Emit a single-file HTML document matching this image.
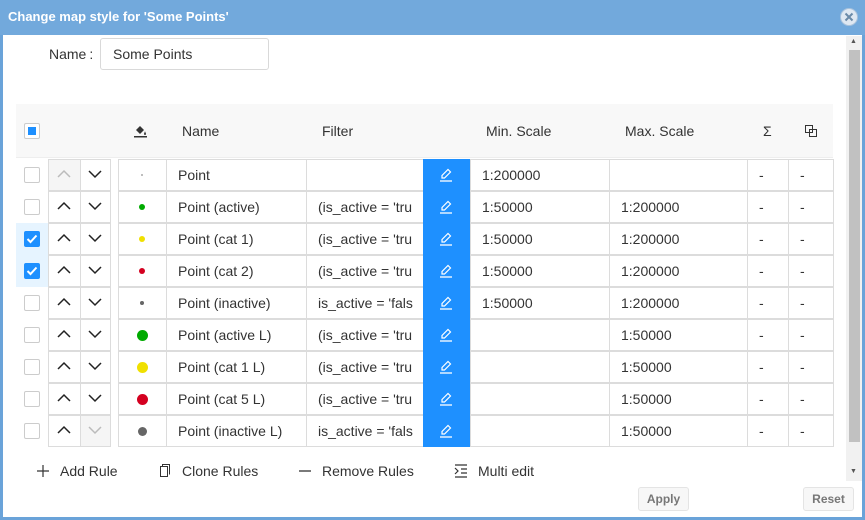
<!DOCTYPE html><html><head><style>
*{box-sizing:border-box;margin:0;padding:0}
body{width:865px;height:520px;background:#6aa3d9;font-family:"Liberation Sans",sans-serif;font-size:14px;color:#333;position:relative;overflow:hidden}
.a{position:absolute}
.c{position:absolute;border:1px solid #dcdcdc;background:#fff;height:32px;line-height:30px;padding-left:11px;white-space:nowrap;overflow:hidden}
.e{position:absolute;background:#1e90ff;height:32px;width:47px;left:423px}
.cb{position:absolute;left:24px;width:16px;height:16px;border:1px solid #ccc;border-radius:2px;background:#fff}
.cb.on{background:#1e90ff;border-color:#1e90ff}
.dot{position:absolute;border-radius:50%}
.ar{position:absolute;height:32px;border:1px solid #dcdcdc;background:#fff}
</style></head><body>
<div class="a" style="left:0;top:0;width:865px;height:35px;background:#72a9dc"></div>
<div class="a" style="left:8px;top:9px;color:#fff;font-weight:bold;font-size:13px">Change map style for 'Some Points'</div>
<div class="a" style="left:840px;top:8px;width:18px;height:18px;border-radius:50%;background:#dfe8f2;border:1px solid #a8c2dc"><svg width="16" height="16" viewBox="0 0 16 16"><path d="M4.5 4.5L11.5 11.5M11.5 4.5L4.5 11.5" stroke="#6a8aa8" stroke-width="2"/></svg></div>
<div class="a" style="left:3px;top:35px;width:859px;height:482px;background:#fff"></div>
<div class="a" style="left:846px;top:36px;width:16px;height:445px;background:#f1f1f1"></div>
<div class="a" style="left:849px;top:50px;width:11px;height:392px;background:#c1c1c1"></div>
<div class="a" style="left:850px;top:38px;font-size:7px;color:#555">▲</div>
<div class="a" style="left:850px;top:468px;font-size:7px;color:#555">▼</div>
<div class="a" style="left:49px;top:46px">Name<span style="margin-left:3px">:</span></div>
<div class="a" style="left:100px;top:38px;width:169px;height:32px;border:1px solid #d9d9d9;border-radius:3px;padding-left:12px;line-height:30px">Some Points</div>
<div class="a" style="left:16px;top:104px;width:817px;height:54px;background:#f8f8f8;border-bottom:1px solid #eee"></div>
<div class="cb" style="top:123px"><div class="a" style="left:3px;top:3px;width:8px;height:8px;background:#1e90ff"></div></div>
<svg class="a" style="left:133px;top:123px" width="16" height="16" viewBox="0 0 16 16"><path d="M3 7L7 3L11 7L7 11Z" fill="#333"/><path d="M12 8c0 1 1 2 1 3a1 1 0 0 1-2 0c0-1 1-2 1-3z" fill="#333"/><rect x="1" y="13" width="13" height="1.5" fill="#333"/></svg>
<div class="a" style="left:182px;top:123px">Name</div>
<div class="a" style="left:322px;top:123px">Filter</div>
<div class="a" style="left:486px;top:123px">Min. Scale</div>
<div class="a" style="left:625px;top:123px">Max. Scale</div>
<div class="a" style="left:763px;top:123px">Σ</div>
<svg class="a" style="left:804px;top:124px" width="14" height="14" viewBox="0 0 14 14"><rect x="1.5" y="1.5" width="7" height="7" fill="none" stroke="#333"/><rect x="5.5" y="5.5" width="7" height="7" fill="none" stroke="#333"/></svg>

<div class="a" style="left:16px;top:223px;width:32px;height:64px;background:#e6f4ff"></div>

<!-- rows -->
<div id="rows"></div>
<div class="a" style="left:0;top:0">
<!-- row template repeated -->
</div>

<div class="cb" style="top:167px"></div><div class="ar" style="left:48px;top:159px;width:33px;background:#f5f5f5"></div><div class="ar" style="left:80px;top:159px;width:31px"></div><div class="c" style="left:118px;top:159px;width:49px"></div><div class="c" style="left:166px;top:159px;width:141px">Point</div><div class="c" style="left:306px;top:159px;width:118px"></div><div class="e" style="top:159px"></div><div class="c" style="left:470px;top:159px;width:140px">1:200000</div><div class="c" style="left:609px;top:159px;width:139px"></div><div class="c" style="left:747px;top:159px;width:42px">-</div><div class="c" style="left:788px;top:159px;width:46px">-</div><div class="dot" style="left:141px;top:174px;width:2px;height:2px;background:#aaa"></div>

<div class="cb" style="top:199px"></div><div class="ar" style="left:48px;top:191px;width:33px"></div><div class="ar" style="left:80px;top:191px;width:31px"></div><div class="c" style="left:118px;top:191px;width:49px"></div><div class="c" style="left:166px;top:191px;width:141px">Point (active)</div><div class="c" style="left:306px;top:191px;width:118px">(is_active = 'tru</div><div class="e" style="top:191px"></div><div class="c" style="left:470px;top:191px;width:140px">1:50000</div><div class="c" style="left:609px;top:191px;width:139px">1:200000</div><div class="c" style="left:747px;top:191px;width:42px">-</div><div class="c" style="left:788px;top:191px;width:46px">-</div><div class="dot" style="left:139px;top:204px;width:6px;height:6px;background:#00aa00"></div>

<div class="cb on" style="top:231px"></div><div class="ar" style="left:48px;top:223px;width:33px"></div><div class="ar" style="left:80px;top:223px;width:31px"></div><div class="c" style="left:118px;top:223px;width:49px"></div><div class="c" style="left:166px;top:223px;width:141px">Point (cat 1)</div><div class="c" style="left:306px;top:223px;width:118px">(is_active = 'tru</div><div class="e" style="top:223px"></div><div class="c" style="left:470px;top:223px;width:140px">1:50000</div><div class="c" style="left:609px;top:223px;width:139px">1:200000</div><div class="c" style="left:747px;top:223px;width:42px">-</div><div class="c" style="left:788px;top:223px;width:46px">-</div><div class="dot" style="left:139px;top:236px;width:6px;height:6px;background:#f0e000"></div>

<div class="cb on" style="top:263px"></div><div class="ar" style="left:48px;top:255px;width:33px"></div><div class="ar" style="left:80px;top:255px;width:31px"></div><div class="c" style="left:118px;top:255px;width:49px"></div><div class="c" style="left:166px;top:255px;width:141px">Point (cat 2)</div><div class="c" style="left:306px;top:255px;width:118px">(is_active = 'tru</div><div class="e" style="top:255px"></div><div class="c" style="left:470px;top:255px;width:140px">1:50000</div><div class="c" style="left:609px;top:255px;width:139px">1:200000</div><div class="c" style="left:747px;top:255px;width:42px">-</div><div class="c" style="left:788px;top:255px;width:46px">-</div><div class="dot" style="left:139px;top:268px;width:6px;height:6px;background:#d40020"></div>

<div class="cb" style="top:295px"></div><div class="ar" style="left:48px;top:287px;width:33px"></div><div class="ar" style="left:80px;top:287px;width:31px"></div><div class="c" style="left:118px;top:287px;width:49px"></div><div class="c" style="left:166px;top:287px;width:141px">Point (inactive)</div><div class="c" style="left:306px;top:287px;width:118px">is_active = 'fals</div><div class="e" style="top:287px"></div><div class="c" style="left:470px;top:287px;width:140px">1:50000</div><div class="c" style="left:609px;top:287px;width:139px">1:200000</div><div class="c" style="left:747px;top:287px;width:42px">-</div><div class="c" style="left:788px;top:287px;width:46px">-</div><div class="dot" style="left:140px;top:301px;width:4px;height:4px;background:#666"></div>

<div class="cb" style="top:327px"></div><div class="ar" style="left:48px;top:319px;width:33px"></div><div class="ar" style="left:80px;top:319px;width:31px"></div><div class="c" style="left:118px;top:319px;width:49px"></div><div class="c" style="left:166px;top:319px;width:141px">Point (active L)</div><div class="c" style="left:306px;top:319px;width:118px">(is_active = 'tru</div><div class="e" style="top:319px"></div><div class="c" style="left:470px;top:319px;width:140px"></div><div class="c" style="left:609px;top:319px;width:139px">1:50000</div><div class="c" style="left:747px;top:319px;width:42px">-</div><div class="c" style="left:788px;top:319px;width:46px">-</div><div class="dot" style="left:137px;top:330px;width:11px;height:11px;background:#00aa00"></div>

<div class="cb" style="top:359px"></div><div class="ar" style="left:48px;top:351px;width:33px"></div><div class="ar" style="left:80px;top:351px;width:31px"></div><div class="c" style="left:118px;top:351px;width:49px"></div><div class="c" style="left:166px;top:351px;width:141px">Point (cat 1 L)</div><div class="c" style="left:306px;top:351px;width:118px">(is_active = 'tru</div><div class="e" style="top:351px"></div><div class="c" style="left:470px;top:351px;width:140px"></div><div class="c" style="left:609px;top:351px;width:139px">1:50000</div><div class="c" style="left:747px;top:351px;width:42px">-</div><div class="c" style="left:788px;top:351px;width:46px">-</div><div class="dot" style="left:137px;top:362px;width:11px;height:11px;background:#f0e000"></div>

<div class="cb" style="top:391px"></div><div class="ar" style="left:48px;top:383px;width:33px"></div><div class="ar" style="left:80px;top:383px;width:31px"></div><div class="c" style="left:118px;top:383px;width:49px"></div><div class="c" style="left:166px;top:383px;width:141px">Point (cat 5 L)</div><div class="c" style="left:306px;top:383px;width:118px">(is_active = 'tru</div><div class="e" style="top:383px"></div><div class="c" style="left:470px;top:383px;width:140px"></div><div class="c" style="left:609px;top:383px;width:139px">1:50000</div><div class="c" style="left:747px;top:383px;width:42px">-</div><div class="c" style="left:788px;top:383px;width:46px">-</div><div class="dot" style="left:137px;top:394px;width:11px;height:11px;background:#d40020"></div>

<div class="cb" style="top:423px"></div><div class="ar" style="left:48px;top:415px;width:33px"></div><div class="ar" style="left:80px;top:415px;width:31px;background:#f5f5f5"></div><div class="c" style="left:118px;top:415px;width:49px"></div><div class="c" style="left:166px;top:415px;width:141px">Point (inactive L)</div><div class="c" style="left:306px;top:415px;width:118px">is_active = 'fals</div><div class="e" style="top:415px"></div><div class="c" style="left:470px;top:415px;width:140px"></div><div class="c" style="left:609px;top:415px;width:139px">1:50000</div><div class="c" style="left:747px;top:415px;width:42px">-</div><div class="c" style="left:788px;top:415px;width:46px">-</div><div class="dot" style="left:138px;top:427px;width:9px;height:9px;background:#666"></div>

<!-- arrows, checks, pencils via svg overlay -->
<svg class="a" style="left:0;top:0" width="865" height="520">
<defs>
<g id="up"><path d="M-6 3L0 -3L6 3" fill="none" stroke-width="1.5"/></g>
<g id="dn"><path d="M-6 -3L0 3L6 -3" fill="none" stroke-width="1.5"/></g>
<g id="pen"><path d="M-4 3L-4 0.5L2 -5.5L4.5 -3L-1.5 3Z" fill="none" stroke="#fff" stroke-width="1.2"/><path d="M-6 6H6" stroke="#fff" stroke-width="1.3"/></g>
<g id="chk"><path d="M-4.5 0L-1.5 3L4.5 -3.5" fill="none" stroke="#fff" stroke-width="2"/></g>
</defs>
<use href="#up" x="64" y="174" stroke="#bbb"/><use href="#dn" x="95" y="174" stroke="#222"/>
<use href="#up" x="64" y="206" stroke="#222"/><use href="#dn" x="95" y="206" stroke="#222"/>
<use href="#up" x="64" y="238" stroke="#222"/><use href="#dn" x="95" y="238" stroke="#222"/>
<use href="#up" x="64" y="270" stroke="#222"/><use href="#dn" x="95" y="270" stroke="#222"/>
<use href="#up" x="64" y="302" stroke="#222"/><use href="#dn" x="95" y="302" stroke="#222"/>
<use href="#up" x="64" y="334" stroke="#222"/><use href="#dn" x="95" y="334" stroke="#222"/>
<use href="#up" x="64" y="366" stroke="#222"/><use href="#dn" x="95" y="366" stroke="#222"/>
<use href="#up" x="64" y="398" stroke="#222"/><use href="#dn" x="95" y="398" stroke="#222"/>
<use href="#up" x="64" y="430" stroke="#222"/><use href="#dn" x="95" y="430" stroke="#bbb"/>
<use href="#pen" x="446" y="175"/><use href="#pen" x="446" y="207"/><use href="#pen" x="446" y="239"/><use href="#pen" x="446" y="271"/><use href="#pen" x="446" y="303"/><use href="#pen" x="446" y="335"/><use href="#pen" x="446" y="367"/><use href="#pen" x="446" y="399"/><use href="#pen" x="446" y="431"/>
<use href="#chk" x="32" y="239"/><use href="#chk" x="32" y="271"/>
<path d="M43 465V477M37 471H49" stroke="#333" stroke-width="1.2"/>
<rect x="160.5" y="466.5" width="7" height="10" fill="none" stroke="#333"/><path d="M162.5 466.5V464.5H169.5V474.5" fill="none" stroke="#333"/>
<path d="M299 471H311" stroke="#333" stroke-width="1.3"/>
<path d="M455 465H467M461 469H467M461 473H467M455 477H467M455 468L458 471L455 474" fill="none" stroke="#333" stroke-width="1.2"/>
</svg>
<div class="a" style="left:60px;top:463px">Add Rule</div>
<div class="a" style="left:182px;top:463px">Clone Rules</div>
<div class="a" style="left:322px;top:463px">Remove Rules</div>
<div class="a" style="left:478px;top:463px">Multi edit</div>
<div class="a" style="left:638px;top:487px;width:51px;height:24px;border:1px solid #e4e4e4;border-radius:3px;background:#f7f7f7;color:#777;font-size:12px;font-weight:bold;text-align:center;line-height:22px">Apply</div>
<div class="a" style="left:803px;top:487px;width:51px;height:24px;border:1px solid #e4e4e4;border-radius:3px;background:#f7f7f7;color:#777;font-size:12px;font-weight:bold;text-align:center;line-height:22px">Reset</div>
</body></html>
